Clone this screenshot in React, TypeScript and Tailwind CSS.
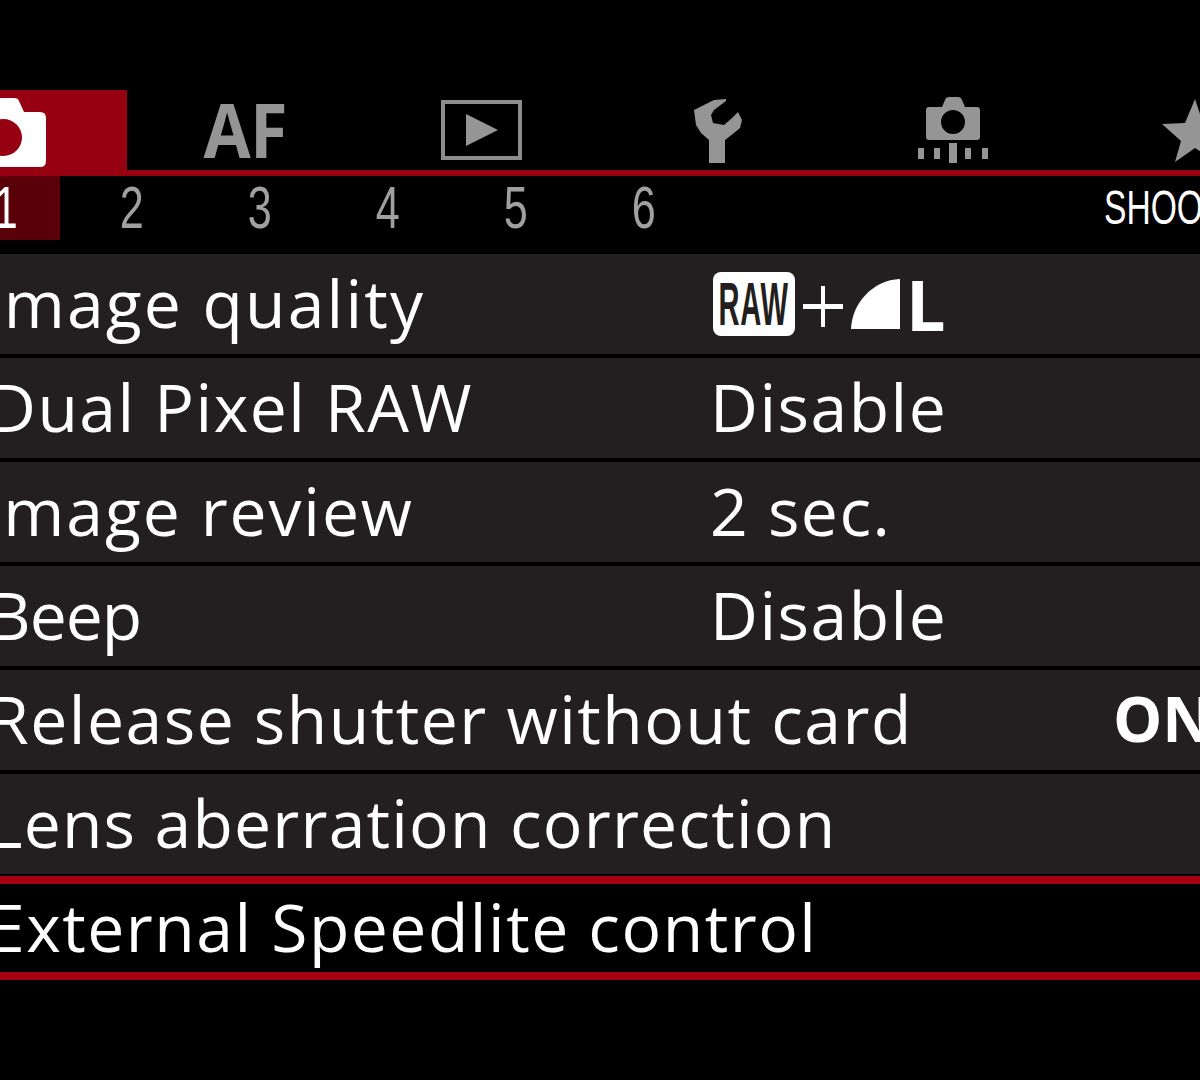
const CameraIcon = () => (
  <svg width="85" height="69" viewBox="0 0 85 69" className="mt-[5px] -ml-[11px]">
    <path
      fillRule="evenodd"
      fill="#fff"
      d="M22 14 L27 3 Q28 0 32 0 L53 0 Q57 0 58 3 L63 14 L79 14 Q85 14 85 20 L85 63 Q85 69 79 69 L6 69 Q0 69 0 63 L0 20 Q0 14 6 14 Z M42.5 21 A18.5 18.5 0 1 0 42.51 58 A18.5 18.5 0 1 0 42.5 21 Z"
    />
  </svg>
);

const AfIcon = () => (
  <span className="font-['Open_Sans',sans-serif] font-bold text-[#959595] text-[76px] leading-none tracking-[-1px] scale-x-[0.9] -mt-[3px]">AF</span>
);

const PlayIcon = () => (
  <div className="w-[81px] h-[60px] ml-[1px] border-[4px] border-[#8c8c8c] flex items-center justify-center">
    <svg width="32" height="32" viewBox="0 0 32 32">
      <path d="M0 0 L32 16 L0 32 Z" fill="#959595" />
    </svg>
  </div>
);

const WrenchIcon = () => (
  <svg width="49" height="65" viewBox="0 0 49 65" className="ml-[2px]">
    <path
      fill="#959595"
      d="M0 12 L20 2 L32 1 L32 3 L20 12 L17 17 L19 25 L30 27 L38 20 L44 14 L48 22 L46 30 L40 35 L31 42 L31 65 L15 65 L15 42 L7 35 L2 27 Z"
    />
  </svg>
);

const CustomCameraIcon = () => (
  <svg width="70" height="66" viewBox="0 0 70 66">
    <path
      fillRule="evenodd"
      fill="#959595"
      d="M24 10 L27 3 Q28 0 31 0 L40 0 Q43 0 44 3 L47 10 L59 10 Q62 10 62 13 L62 40 Q62 43 59 43 L11 43 Q8 43 8 40 L8 13 Q8 10 11 10 Z M35 13 A12 12 0 1 0 35.01 37 A12 12 0 1 0 35 13 Z"
    />
    <rect x="0" y="51" width="6" height="11" fill="#959595" />
    <rect x="16" y="51" width="6" height="11" fill="#959595" />
    <rect x="31" y="46" width="8" height="20" fill="#959595" />
    <rect x="47" y="51" width="6" height="11" fill="#959595" />
    <rect x="64" y="51" width="6" height="11" fill="#959595" />
  </svg>
);

const StarIcon = () => (
  <svg width="66" height="63" viewBox="0 0 66 63" className="ml-3">
    <path fill="#959595" d="M33 0 L41 24 L66 25 L46 42 L54 63 L33 49 L13 63 L19 42 L0 25 L23 24 Z" />
  </svg>
);

const QualityValue = () => (
  <div className="flex items-center h-full ml-[3px]">
    <span className="bg-white rounded-lg w-[82px] h-[64px] flex items-center justify-center overflow-hidden">
      <span className="shrink-0 scale-x-[0.47] font-['Liberation_Sans',sans-serif] font-bold text-[#231f20] text-[62px] leading-none">
        RAW
      </span>
    </span>
    <svg width="40" height="41" viewBox="0 0 40 41" className="ml-2 mt-[4px]">
      <path d="M0 18 H40 V23 H0 Z M18 0 H22 V41 H18 Z" fill="#fff" />
    </svg>
    <svg width="49" height="50" viewBox="0 0 49 50" className="ml-[8px]">
      <path d="M0 50 C1 24 22 1 49 0 L49 50 Z" fill="#fff" />
    </svg>
    <span className="ml-[6px] font-['Open_Sans',sans-serif] font-bold text-white text-[70px] leading-none tracking-normal">L</span>
  </div>
);

const rows = [
  { label: 'Image quality', value: <QualityValue />, spacing: 'tracking-[2.2px] -ml-[5px]' },
  { label: 'Dual Pixel RAW', value: <span className="pb-1">Disable</span>, spacing: 'tracking-[1.5px]' },
  { label: 'Image review', value: <span className="pb-1">2 sec.</span>, spacing: 'tracking-[1.9px] -ml-[5px]' },
  { label: 'Beep', value: <span className="pb-1">Disable</span>, spacing: 'tracking-[-1px]' },
  { label: 'Release shutter without card', value: <span className="ml-[403px] pb-1 font-bold text-[62px] tracking-normal">ON</span>, spacing: 'tracking-[1.5px]' },
  { label: 'Lens aberration correction', value: null, spacing: 'tracking-[1.2px]' },
];

const digits = ['2', '3', '4', '5', '6'];

export default function App() {
  return (
    <div className="w-[1200px] h-[1080px] bg-black overflow-hidden pt-[90px] font-['Open_Sans',sans-serif] text-white">
      {/* Main tabs */}
      <div className="flex h-[80px] -ml-[109px] w-max">
        <div className="w-[236px] bg-[#960010] flex items-center justify-center">
          <CameraIcon />
        </div>
        <div className="w-[236px] flex items-center justify-center"><AfIcon /></div>
        <div className="w-[236px] flex items-center justify-center"><PlayIcon /></div>
        <div className="w-[236px] flex items-center justify-center"><WrenchIcon /></div>
        <div className="w-[236px] flex items-center justify-center"><CustomCameraIcon /></div>
        <div className="w-[236px] flex items-center justify-center"><StarIcon /></div>
      </div>
      <div className="h-[6px] bg-[#960010]" />

      {/* Sub tabs */}
      <div className="flex items-center h-[64px] -ml-[56px] gap-2 w-max font-['Liberation_Sans',sans-serif] text-[#a0a0a0] text-[60px] leading-none">
        <div className="w-[116px] h-full pl-2 bg-[#5a0008] text-white flex items-center justify-center">
          <span className="scale-x-[0.72]">1</span>
        </div>
        {digits.map((d) => (
          <div key={d} className="w-[120px] pl-2 flex justify-center">
            <span className="scale-x-[0.72]">{d}</span>
          </div>
        ))}
        <div className="ml-[396px] text-white text-[48px] whitespace-nowrap origin-left scale-x-[0.7]">SHOOT1</div>
      </div>

      {/* Menu rows */}
      <div className="mt-[14px] flex flex-col gap-1">
        {rows.map((row) => (
          <div key={row.label} className="h-[100px] bg-[#231f20] flex items-center text-[66px] leading-none -ml-[12px] w-[1224px] whitespace-nowrap">
            <div className="w-[722px] shrink-0 pb-1">
              <span className={`inline-block ${row.spacing}`}>{row.label}</span>
            </div>
            {row.value && <div className="h-full flex items-center tracking-[1.5px]">{row.value}</div>}
          </div>
        ))}
      </div>

      {/* Selected row */}
      <div className="mt-[2px] h-[104px] border-y-8 border-[#a50012] flex items-center text-[66px] tracking-[1.5px] leading-none -ml-[12px] w-[1224px] pb-1">
        External Speedlite control
      </div>
    </div>
  );
}
